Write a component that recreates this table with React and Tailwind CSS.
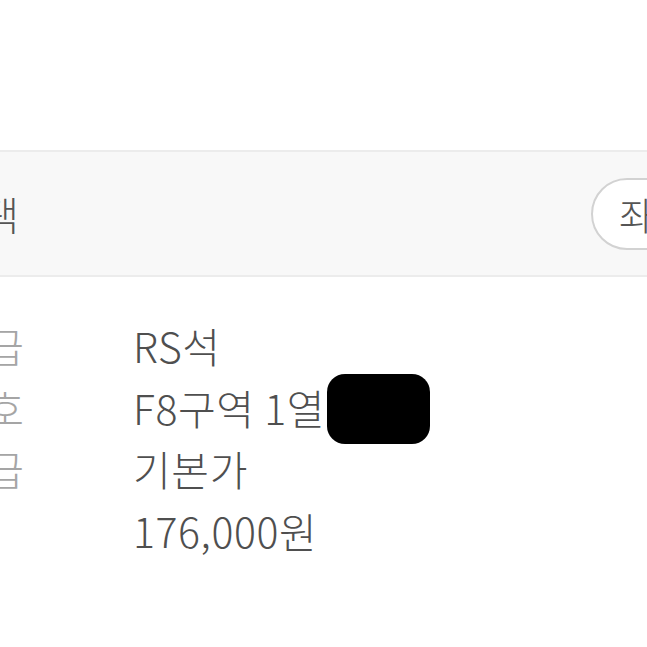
export default function App() {
  const rows = [
    { label: "좌석등급", value: "RS석" },
    { label: "좌석번호", value: "F8구역 1열", redacted: true },
    { label: "가격등급", value: "기본가" },
    { label: "", value: "176,000원" },
  ];

  return (
    <div
      className="w-[647px] h-[647px] overflow-hidden bg-white"
      style={{ fontFamily: '"Noto Sans CJK KR", "Noto Sans", sans-serif' }}
    >
      <div className="h-[150px]" />

      {/* Header band */}
      <div className="h-[127px] bg-[#f8f8f8] border-t-2 border-b-2 border-[#ececec] flex items-center justify-between">
        <div className="w-[19px] overflow-hidden flex justify-end">
          <span className="whitespace-nowrap text-[40px] font-light leading-none text-[#555]">좌석선택</span>
        </div>
        <div className="h-[72px] w-[100px] -mr-[44px] rounded-full border-2 border-[#d2d2d2] bg-white flex items-center pl-[26px] overflow-hidden">
          <span className="whitespace-nowrap text-[38px] font-light leading-none text-[#555]">좌석도</span>
        </div>
      </div>

      {/* Info rows */}
      <div className="pt-[38px] flex flex-col">
        {rows.map((r, i) => (
          <div key={i} className="h-[61.5px] flex items-center">
            <div className="w-[24px] overflow-hidden flex justify-end">
              <span className="whitespace-nowrap text-[41px] font-light leading-none text-[#a5a5a5]">{r.label}</span>
            </div>
            <div className="ml-[109px] flex items-center">
              <span className="whitespace-nowrap text-[41px] font-light leading-none text-[#4f4f4f] tracking-[0.6px]">{r.value}</span>
              {r.redacted && (
                <div className="ml-[2px] mt-[4px] w-[103px] h-[70px] bg-black rounded-[18px]" />
              )}
            </div>
          </div>
        ))}
      </div>
    </div>
  );
}
